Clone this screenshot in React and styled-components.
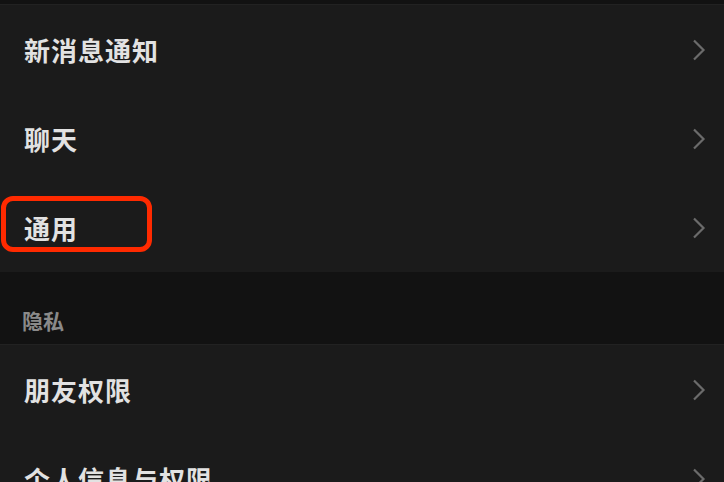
import React from 'react'
import styled, { createGlobalStyle } from 'styled-components'

const GlobalStyle = createGlobalStyle`
  html, body {
    margin: 0;
    padding: 0;
    background: #121212;
    font-family: "Noto Sans CJK SC", "Noto Sans", sans-serif;
  }
`

const Page = styled.div`
  width: 724px;
  height: 482px;
  overflow: hidden;
  background: #121212;
  padding-top: 4px;
  box-sizing: border-box;
`

const Card = styled.div`
  background: #1b1b1b;
  border-top: 1px solid #222;
`

const Row = styled.div`
  position: relative;
  height: 89px;
  display: flex;
  align-items: center;
  justify-content: space-between;
  padding: 0 18px 0 24px;
`

const Title = styled.span`
  color: #e2e2e2;
  font-size: 26px;
  font-weight: 700;
  letter-spacing: 1px;
`

const SectionLabel = styled.div`
  height: 72px;
  display: flex;
  align-items: center;
  padding: 23px 0 0 22px;
  box-sizing: border-box;
  color: #8a8a8a;
  font-size: 21px;
  font-weight: 700;
`

const Highlight = styled.div`
  position: absolute;
  left: 1px;
  top: 13px;
  width: 141px;
  height: 46px;
  border: 5px solid #ff2a00;
  border-radius: 12px;
`

const Chevron = () => (
  <svg width="14" height="22" viewBox="0 0 14 22" fill="none">
    <path d="M2 1.5 L11.5 11 L2 20.5" stroke="#6b6b6b" strokeWidth="2.2" />
  </svg>
)

const Item = ({ title, marked }) => (
  <Row>
    <Title>{title}</Title>
    <Chevron />
    {marked && <Highlight />}
  </Row>
)

const App = () => (
  <>
    <GlobalStyle />
    <Page>
      <Card>
        <Item title="新消息通知" />
        <Item title="聊天" />
        <Item title="通用" marked />
      </Card>
      <SectionLabel>隐私</SectionLabel>
      <Card>
        <Item title="朋友权限" />
        <Item title="个人信息与权限" />
      </Card>
    </Page>
  </>
)

export default App
